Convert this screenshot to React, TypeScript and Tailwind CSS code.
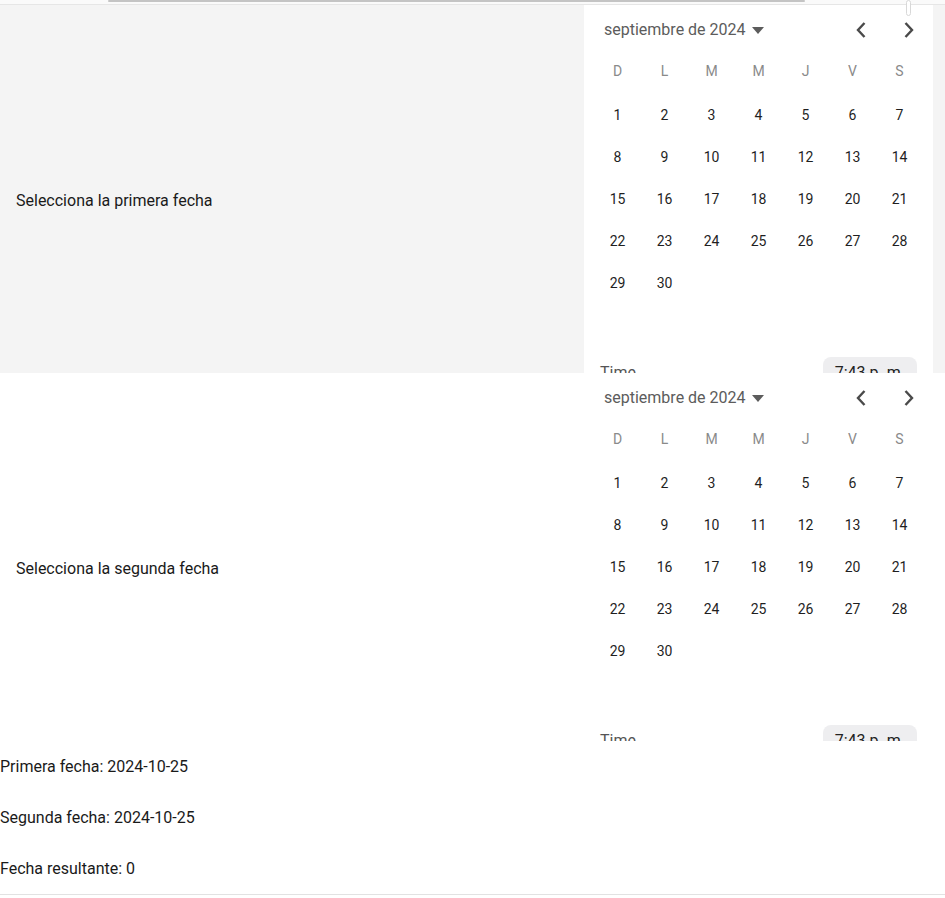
import React from "react";

const WEEK = ["D", "L", "M", "M", "J", "V", "S"];

function Calendar() {
  const days: (number | null)[] = [];
  for (let i = 1; i <= 30; i++) days.push(i);
  while (days.length < 42) days.push(null);
  return (
    <div className="w-[349px] h-[368px] overflow-hidden bg-white px-[10px] pt-[1px] shrink-0">
      <div className="h-[48px] flex items-center">
        <div className="flex items-center pl-[10px] text-[16px] text-[#5c5c5c]">
          <span>septiembre de 2024</span>
          <svg width="12" height="7" viewBox="0 0 12 7" className="ml-[6px]">
            <path d="M0 0 L12 0 L6 7 Z" fill="#5c5c5c" />
          </svg>
        </div>
        <div className="ml-auto -mr-[10px] flex items-center">
          <div className="w-[48px] flex justify-center">
            <svg width="12" height="18" viewBox="0 0 12 18">
              <path d="M9.5 2 L3 9 L9.5 16" stroke="#4a4a4a" strokeWidth="2.4" fill="none" />
            </svg>
          </div>
          <div className="w-[48px] flex justify-center">
            <svg width="12" height="18" viewBox="0 0 12 18">
              <path d="M2.5 2 L9 9 L2.5 16" stroke="#4a4a4a" strokeWidth="2.4" fill="none" />
            </svg>
          </div>
        </div>
      </div>
      <div className="grid grid-cols-7 h-[34px] items-center text-[14px] text-[#8a8a8a]">
        {WEEK.map((w, i) => (
          <div key={i} className="text-center">{w}</div>
        ))}
      </div>
      <div className="grid grid-cols-7 mt-[6px]">
        {days.map((d, i) => (
          <div key={i} className="h-[42px] flex items-center justify-center text-[14px] text-[#1f1f1f]">
            {d ?? ""}
          </div>
        ))}
      </div>
      <div className="flex items-center pt-[11px] px-[6px]">
        <span className="text-[16px] text-[#555]">Time</span>
        <div className="ml-auto h-[32px] px-[12px] rounded-[8px] bg-[#eeeef0] flex items-center text-[16px] text-[#222]">
          7:43 p. m.
        </div>
      </div>
    </div>
  );
}

export default function App() {
  return (
    <div className="w-[945px] h-[898px] bg-white relative" style={{ fontFamily: "Roboto, 'Noto Sans', sans-serif" }}>
      <div className="h-[5px] relative border-b border-[#e6e6e6] bg-[#fafafa]">
        <div className="absolute left-[108px] top-0 w-[697px] h-[2px] bg-[#c4c4c4] rounded-full" />
      </div>
      <div className="absolute left-[906px] top-0 w-[5px] h-[16px] bg-white border border-[#d8d8d8] rounded-full z-10" />
      <div className="flex h-[368px] bg-[#f4f4f4]">
        <div className="w-[584px] pl-4 pt-[184px] text-[16px] leading-[24px] text-[#1a1a1a]">
          Selecciona la primera fecha
        </div>
        <Calendar />
      </div>
      <div className="flex h-[368px] bg-white">
        <div className="w-[584px] pl-4 pt-[184px] text-[16px] leading-[24px] text-[#1a1a1a]">
          Selecciona la segunda fecha
        </div>
        <Calendar />
      </div>
      <div className="text-[16px] text-[#1a1a1a] border-b border-[#e2e2e2]">
        <div className="h-[51px] flex items-center">Primera fecha: 2024-10-25</div>
        <div className="h-[51px] flex items-center">Segunda fecha: 2024-10-25</div>
        <div className="h-[51px] flex items-center">Fecha resultante: 0</div>
      </div>
    </div>
  );
}
